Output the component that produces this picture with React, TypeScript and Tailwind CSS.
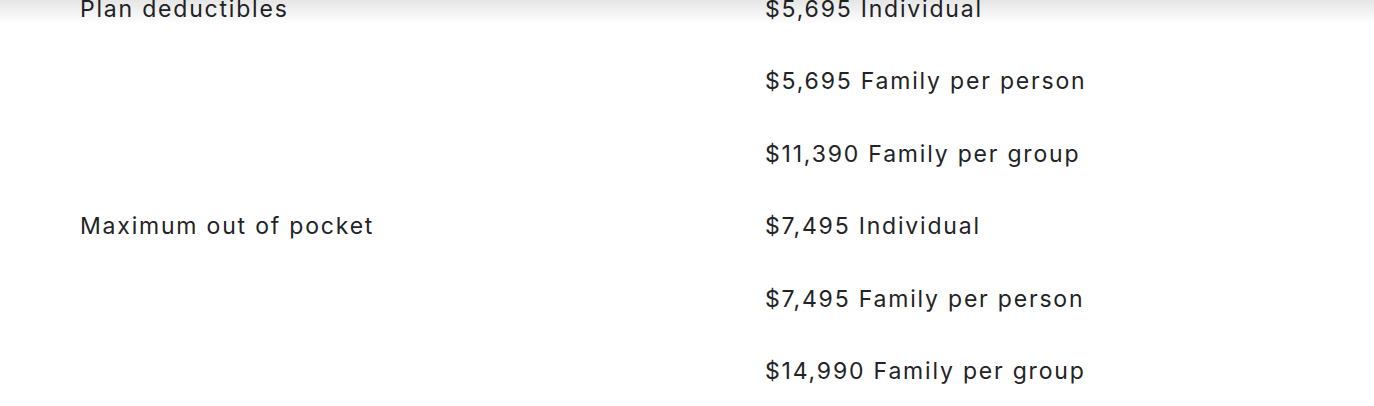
const rows = [
  { label: "Plan deductibles", values: ["$5,695 Individual", "$5,695 Family per person", "$11,390 Family per group"] },
  { label: "Maximum out of pocket", values: ["$7,495 Individual", "$7,495 Family per person", "$14,990 Family per group"] },
];

export default function App() {
  return (
    <div className="relative h-[406px] overflow-hidden bg-white font-['Inter',sans-serif] text-[23px] tracking-[1.8px] text-[#222326]">
      {/* header shadow bleeding in from above */}
      <div className="pointer-events-none absolute inset-x-0 top-0 h-6 bg-gradient-to-b from-black/10 to-transparent" />
      <div className="-mt-[9px] px-20">
        {rows.map((row) => (
          <div key={row.label} className="grid grid-cols-[685px_1fr]">
            <div className="h-[72.4px] leading-[36px]">{row.label}</div>
            <div className="flex flex-col">
              {row.values.map((v) => (
                <div key={v} className="h-[72.4px] leading-[36px]">
                  {v}
                </div>
              ))}
            </div>
          </div>
        ))}
      </div>
    </div>
  );
}
